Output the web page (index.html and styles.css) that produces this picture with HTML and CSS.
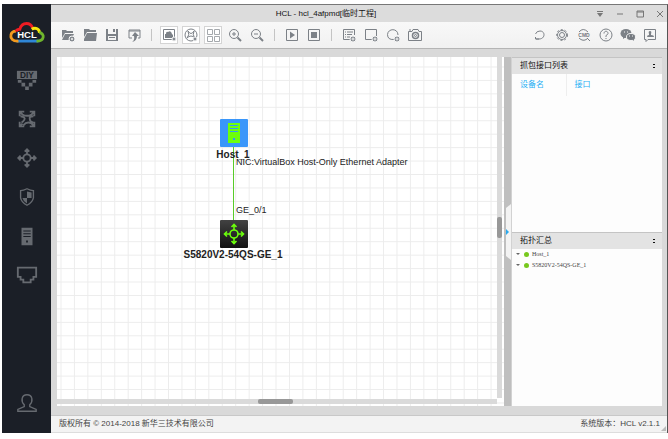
FILE: index.html
```html
<!DOCTYPE html>
<html lang="zh-CN">
<head>
<meta charset="utf-8">
<title>HCL</title>
<link rel="stylesheet" href="styles.css">
</head>
<body>
<div class="window">
  <nav class="sidebar" aria-label="设备">
    <svg class="logo" viewBox="0 0 40 24" role="img" aria-label="HCL">
      <path d="M9 20.500H32" stroke="#2f86d6" stroke-width="3"/>
      <path d="M11 20.500C5 21 2.500 17.500 3 14.500C3.400 11.500 6 10 8.500 10" stroke="#f39a1e" stroke-width="3"/>
      <path d="M8.500 10.500C9.500 8 12 8 12.500 8C13.500 4 16.500 2 19.500 2C22.500 2 25 4 26 7" stroke="#ee1c23" stroke-width="3"/>
      <path d="M25 8C29 5.500 33.500 8 33 12" stroke="#f6e60d" stroke-width="3"/>
      <path d="M33 11.500C36 12 37.500 14.500 37 16.500C36.500 19.500 34 20.500 30 20.500" stroke="#6fb52c" stroke-width="3"/>
      <text class="logo-text" x="20" y="17">HCL</text>
    </svg>
    <div class="devices">
      <button aria-label="DIY"><svg viewBox="0 0 24 24"><path class="fill" d="M1 2H23V11H1z"/><text class="diy" x="12" y="10">DIY</text><path class="fill" d="M2 12h4v3H2zM18 12h4v3h-4zM6 15h4v4H6zM14 15h4v4h-4zM10 19h4v4h-4z"/></svg></button>
      <button aria-label="路由器"><svg viewBox="0 0 24 24"><path class="thick" d="M9 4H4V9M4 4L7 7Q12 10 17 7L20 4M15 4H20V9M4 15V20H9M4 20L7 17M20 20L17 17Q12 14 8 19M15 20H20V15M5 9Q11 10 9 13Q8 15 6 16M19 9Q14 9 15 12Q15 15 19 16"/></svg></button>
      <button aria-label="交换机"><svg viewBox="0 0 24 24"><use class="thick" href="#switch"/></svg></button>
      <button aria-label="防火墙"><svg viewBox="0 0 24 24"><path class="mid" d="M12 3Q16 5 19 5V13Q18 18 12 21Q6 18 5 13V5Q8 5 12 3z"/><path class="fill" d="M12 6l5 1v6h-5zM7 13h5v6q-4-2-5-6z"/></svg></button>
      <button aria-label="主机"><svg viewBox="0 0 24 24"><path class="fill" fill-rule="evenodd" d="M6 3H18V22H6zM8 6v1h8V6zM8 9v1h8V9zM8 12v1h8v-1zM11 17v2h2v-2z"/></svg></button>
      <button aria-label="端口"><svg viewBox="0 0 24 24"><path class="thick" d="M2 4H22V14H19V17H16V20H8V17H5V14H2z"/></svg></button>
    </div>
    <button class="user" aria-label="用户"><svg viewBox="0 0 24 24"><path class="mid" d="M9 14C5 10 6 3 12 3S19 10 15 14V16L22 19V21H2V19L9 16z"/></svg></button>
  </nav>

  <div class="content">
    <header class="titlebar">
      <h1>HCL - hcl_4afpmd[临时工程]</h1>
      <div class="controls">
        <button aria-label="菜单"><svg viewBox="0 0 10 10"><path d="M2 2.500H8"/><path class="fill" d="M2 4H8L5 8z"/></svg></button>
        <button aria-label="最小化"><svg viewBox="0 0 10 10"><path d="M2 5H8"/></svg></button>
        <button aria-label="最大化"><svg viewBox="0 0 10 10"><path d="M2 2H8.500V8H2zM2 3H8.500"/></svg></button>
        <button aria-label="关闭"><svg viewBox="0 0 10 10"><path d="M2 2L8 8M8 2L2 8"/></svg></button>
      </div>
    </header>

    <div class="toolbar">
      <button aria-label="新建"><svg viewBox="0 0 18 18"><path class="fill" d="M3 4h4l1 1h6v2H6L3 12z"/><path class="fill" d="M6 8h9l-1 2-3 4H3z"/><circle class="badge" cx="13" cy="13" r="3"/><circle class="hole" cx="13" cy="13" r="1"/></svg></button>
      <button aria-label="打开"><svg viewBox="0 0 18 18"><path class="fill" d="M3 3h5l1 1h6v2H6L3 11z"/><path class="fill" d="M6 7h10l-1 8H3V13z"/></svg></button>
      <button aria-label="保存"><svg viewBox="0 0 18 18"><path class="fill" fill-rule="evenodd" d="M3 3h12v12H3zM5 3v5h8V3zM5 10v4h8v-4z"/><path class="fill" d="M10 3h2v3h-2zM6 11h6v1H6z"/></svg></button>
      <button aria-label="导出"><svg viewBox="0 0 18 18"><path d="M7 12H4V4H15V12H13M4 5H15"/><path class="fill" d="M10 6l4 4h-2q0 5-5 6 3-2 2-6H7z"/></svg></button>
      <span class="sep"></span>
      <button class="boxed" aria-label="设备图标"><svg viewBox="0 0 18 18"><path d="M3.500 3.500H14.500V13.500H3.500z"/><path class="fill" d="M5 12V8H6Q6 5 8 6 11 4 12 8L13 9V12z"/><circle class="badge" cx="14" cy="13" r="2"/></svg></button>
      <button class="boxed" aria-label="拓扑图"><svg viewBox="0 0 18 18"><circle cx="9" cy="9" r="6"/><path d="M6 5Q9 10 12 5M5 12Q9 8 13 12M6 5Q8 9 5 12M12 5Q10 9 13 12"/><circle class="badge" cx="13" cy="13" r="2"/></svg></button>
      <button class="boxed" aria-label="网格"><svg class="light" viewBox="0 0 18 18"><path d="M3.500 3.500h5v5h-5zM10.500 3.500h5v5h-5zM3.500 10.500h5v5h-5zM10.500 10.500h5v5h-5z"/></svg></button>
      <button aria-label="放大"><svg viewBox="0 0 18 18"><circle cx="8" cy="8" r="4.500"/><path d="M6 8h4M8 6v4"/><path class="thick" d="M11.500 11.500L15 15"/></svg></button>
      <button aria-label="缩小"><svg viewBox="0 0 18 18"><circle cx="8" cy="8" r="4.500"/><path d="M6 8h4"/><path class="thick" d="M11.500 11.500L15 15"/></svg></button>
      <span class="sep"></span>
      <button aria-label="启动"><svg viewBox="0 0 18 18"><path d="M3.500 3.500H14.500V14.500H3.500z"/><path class="fill" d="M7 5.500v7L12 9z"/></svg></button>
      <button aria-label="停止"><svg viewBox="0 0 18 18"><path d="M3.500 3.500H14.500V14.500H3.500z"/><path class="fill" d="M6 6h6v6H6z"/></svg></button>
      <span class="sep"></span>
      <button aria-label="添加列表"><svg viewBox="0 0 18 18"><path d="M10 13.500H3.500V3.500H14.500V9M5 6h1M7 6h6M5 8.500h1M7 8.500h5M5 11h1M7 11h3"/><circle class="badge" cx="13" cy="13" r="3"/><path class="plus" d="M11.500 13h3M13 11.500v3"/></svg></button>
      <button aria-label="添加矩形"><svg viewBox="0 0 18 18"><path d="M10 13.500H3.500V3.500H14.500V10"/><circle class="badge" cx="13" cy="13" r="3"/><path class="plus" d="M11.500 13h3M13 11.500v3"/></svg></button>
      <button aria-label="添加圆形"><svg viewBox="0 0 18 18"><path d="M10 13.500Q3.500 14 3.500 8.500C4 2 14 2 14 9"/><circle class="badge" cx="13" cy="13" r="3"/><path class="plus" d="M11.500 13h3M13 11.500v3"/></svg></button>
      <button aria-label="截图"><svg viewBox="0 0 18 18"><path d="M2.500 5.500H6L7 3.500H12L13 5.500H15.500V14.500H2.500zM3 4h2"/><circle class="mid" cx="9.500" cy="9.500" r="3"/><circle cx="9.500" cy="9.500" r="1"/></svg></button>
      <div class="tools-right">
        <button aria-label="刷新"><svg viewBox="0 0 18 18"><path d="M5 13H8C14.500 13 14.500 5 9 5Q5.500 5 4.500 8M4.500 11V13H8"/></svg></button>
        <button aria-label="设置"><svg viewBox="0 0 18 18"><circle cx="9" cy="9" r="4.500"/><circle cx="9" cy="9" r="2.500"/><circle class="teeth" cx="9" cy="9" r="5.500"/></svg></button>
        <button aria-label="命令"><svg viewBox="0 0 18 18"><path d="M4 6Q8 1 13 6M4 12Q8 16 12 13M12 12L15 15"/><text class="cmd" x="9" y="11">CMD</text></svg></button>
        <button aria-label="帮助"><svg viewBox="0 0 18 18"><circle cx="9" cy="9" r="6"/><path d="M7 7.500C7 4.500 11 4.500 11 7.500Q11 8.500 9 9.500V11M9 12v1"/></svg></button>
        <button aria-label="微信"><svg viewBox="0 0 18 18"><ellipse class="fill" cx="7" cy="7.500" rx="5.500" ry="4.500"/><path class="fill" d="M4 10v3l3-2z"/><ellipse class="bubble" cx="12" cy="11" rx="4.500" ry="3.500"/><path class="fill" d="M13 13l2 2v-3z"/><path class="plus" d="M5 6h1M8 6h1M10 10h1M13 10h1"/></svg></button>
        <button aria-label="反馈"><svg viewBox="0 0 18 18"><path d="M7 13.500L5 15.500V13.500H3.500V3.500H14.500V13.500z"/><path class="fill" d="M9 5q2 0 1 3v1q3 0 3 2H6q0-2 2-2V8Q7 5 9 5z"/></svg></button>
      </div>
    </div>

    <main class="workspace">
      <section class="canvas" aria-label="拓扑">
        <svg class="grid">
          <defs><pattern id="cells" x="3.500" y="9.500" width="13.440" height="13.440" patternUnits="userSpaceOnUse"><path d="M0.500 0V13.440M0 0.500H13.440" stroke="#ececec"/></pattern></defs>
          <rect width="100%" height="100%" fill="url(#cells)"/>
          <path d="M176.500 88V164" stroke="#58cc28"/>
        </svg>
        <svg class="node host" viewBox="0 0 28 28"><rect width="28" height="28" rx="1" fill="#3996fa"/><path fill="#6cff0c" fill-rule="evenodd" d="M8 4H20V24H8zM10 6v1h8V6zM10 9v1h8V9zM10 12v1h8v-1zM13 19v2h2v-2z"/></svg>
        <svg class="node switch" viewBox="0 0 28 28"><defs><linearGradient id="dark" x2="0" y2="1"><stop stop-color="#424242"/><stop offset="1" stop-color="#101010"/></linearGradient><g id="switch"><circle cx="12" cy="12" r="4"/><path d="M12 8V3M12 16V21M8 12H3M16 12H21M9.500 5L12 2.500L14.500 5M9.500 19L12 21.500L14.500 19M5 9.500L2.500 12L5 14.500M19 9.500L21.500 12L19 14.500"/></g></defs><rect width="28" height="28" rx="1" fill="url(#dark)"/><use href="#switch" x="2" y="2" fill="none" stroke="#6cff0c" stroke-width="1.600"/></svg>
        <span class="name host-name">Host_1</span>
        <span class="name switch-name">S5820V2-54QS-GE_1</span>
        <span class="port nic">NIC:VirtualBox Host-Only Ethernet Adapter</span>
        <span class="port ge">GE_0/1</span>
        <div class="scroll-y"><i></i></div>
        <div class="scroll-x"><i></i></div>
      </section>
      <div class="splitter"><button aria-label="收起面板"><svg viewBox="0 0 6 56"><path fill="#f3f3f3" d="M6 0L1 4V52L6 56z"/><path fill="#29a9ee" d="M1 25L4 28L1 31z"/></svg></button></div>
      <aside class="panels">
        <section class="panel">
          <h2>抓包接口列表<button aria-label="折叠"><svg viewBox="0 0 6 6"><path d="M2 1.500H4M2 4.500H4"/></svg></button></h2>
          <table><thead><tr><th>设备名</th><th>接口</th></tr></thead></table>
        </section>
        <section class="panel">
          <h2>拓扑汇总<button aria-label="折叠"><svg viewBox="0 0 6 6"><path d="M2 1.500H4M2 4.500H4"/></svg></button></h2>
          <ul><li>Host_1</li><li>S5820V2-54QS-GE_1</li></ul>
        </section>
      </aside>
    </main>

    <footer class="statusbar"><span>版权所有 © 2014-2018 新华三技术有限公司</span><span>系统版本：HCL v2.1.1</span><svg class="grip" viewBox="0 0 6 6"><path fill="#bbb" d="M6 0V6H0z"/></svg></footer>
  </div>
</div>
</body>
</html>
```
FILE: styles.css
```css
* { box-sizing: border-box; }
body {
  margin: 0;
  background: #fff;
  color: #222;
  font: 8px/12px "Liberation Sans", "Noto Sans CJK SC", sans-serif;
}
button { padding: 0; border: 0; background: none; color: inherit; display: grid; place-items: center; }
svg { display: block; fill: none; stroke: none; }
button svg { stroke: currentColor; }
button .fill { fill: currentColor; stroke: none; }
button .mid { stroke-width: 1.500; }
button .thick { stroke-width: 2; }
button text { stroke: none; }

.window { display: flex; height: 100vh; padding: 4px 0 6px 2px; }

.sidebar {
  flex: 0 0 49px;
  display: flex;
  flex-direction: column;
  align-items: center;
  padding: 17px 0 16px;
  background: #1b1f27;
  color: #666a70;
}
.logo { width: 38px; height: 24px; }
.logo-text { font-size: 10px; font-weight: bold; fill: #fff; text-anchor: middle; }
.devices { margin-top: 15px; }
.sidebar button { width: 49px; height: 39px; }
.sidebar button svg { width: 22px; height: 22px; }
.diy { font-size: 9px; font-weight: bold; fill: #1b1f27; text-anchor: middle; }
.sidebar .user { height: 28px; margin-top: auto; }

.content {
  flex: 1;
  min-width: 0;
  display: flex;
  flex-direction: column;
  border-top: 1px solid #777;
  border-right: 1px solid #555;
}
.titlebar { display: flex; align-items: center; height: 17px; background: #dcdcdc; position: relative; justify-content: center; }
h1 { margin: 0; font-size: 8px; font-weight: normal; color: #111; padding-right: 66px; }
.controls { position: absolute; right: 2px; display: flex; gap: 10px; color: #777; }
.controls svg { width: 10px; height: 10px; }

.toolbar {
  display: flex;
  align-items: center;
  gap: 4px;
  height: 27px;
  padding: 0 8px;
  background: linear-gradient(#f8f8f8, #f1f1f1);
  border-bottom: 1px solid #b5b5b5;
  color: #7c8187;
}
.toolbar button, .toolbar svg { width: 18px; height: 18px; }
.toolbar .boxed { outline: 1px solid #d4d4d4; outline-offset: -1px; background: #fff; }
.light { color: #a4a8ac; }
.sep { width: 1px; height: 12px; margin: 0 4px; background: #c4c4c4; }
.tools-right { display: flex; gap: 4px; margin-left: auto; }
.badge { fill: #858a90; stroke: #f4f4f4; }
.plus { stroke: #f4f4f4; }
.hole { fill: #f4f4f4; stroke: none; }
.bubble { fill: #757a80; stroke: #f4f4f4; }
.teeth { stroke-dasharray: 2 2; }
.cmd { font-size: 5px; font-weight: bold; fill: #757a80; text-anchor: middle; }

.workspace { flex: 1; min-height: 0; display: flex; padding: 8px 5px 9px 6px; background: #d9d9d9; }
.canvas { flex: 1; min-width: 0; position: relative; overflow: hidden; background: #fff; }
.grid { width: 100%; height: 100%; }
.node { position: absolute; width: 28px; height: 28px; left: 163px; }
.host { top: 62px; }
.switch { top: 163px; }
.name { position: absolute; left: 176px; transform: translateX(-50%); font-size: 10px; font-weight: bold; white-space: nowrap; }
.host-name { top: 92px; }
.switch-name { top: 192px; }
.port { position: absolute; left: 179px; font-size: 9px; white-space: nowrap; }
.nic { top: 99px; }
.ge { top: 147px; }
.scroll-y, .scroll-x { position: absolute; background: #dadada; }
.scroll-y { top: 0; right: 2px; bottom: 8px; width: 5px; }
.scroll-x { left: 0; right: 7px; bottom: 2px; height: 5px; }
.scroll-y i, .scroll-x i { display: block; border-radius: 2px; background: #989898; }
.scroll-y i { height: 21px; margin-top: 160px; }
.scroll-x i { width: 35px; height: 5px; margin-left: 201px; }

.splitter { flex: 0 0 8px; display: flex; align-items: center; justify-content: flex-end; background: #bfbfbf; border-right: 1px solid #d2d2d2; }
.splitter svg { width: 6px; height: 56px; stroke: none; }

.panels { flex: 0 0 150px; display: grid; grid-template-rows: 1fr 1fr; background: #fdfdfd; }
h2 {
  display: flex;
  justify-content: space-between;
  align-items: center;
  height: 17px;
  margin: 0;
  padding: 0 5px 0 8px;
  background: #e3e3e3;
  border-top: 1px solid #c4c4c4;
  font-size: 8px;
  font-weight: normal;
  color: #111;
}
h2 svg { width: 6px; height: 6px; }
table { width: 100%; border-collapse: collapse; table-layout: fixed; }
th { height: 22px; padding: 0 8px; font-weight: normal; text-align: left; color: #29b0f4; }
th:first-child { width: 54px; border-right: 1px solid #eee; }
ul { margin: 0; padding: 0 4px; list-style: none; }
li { display: flex; align-items: center; height: 11px; font: 6px/11px "Liberation Serif", serif; color: #444; }
li::before { content: ""; order: -2; border: 2px solid transparent; border-top-color: #666; border-bottom: 0; margin-right: 4px; }
li::after { content: ""; order: -1; width: 5px; height: 5px; margin-right: 3px; border-radius: 50%; background: #78c81e; }

.statusbar {
  position: relative;
  display: flex;
  justify-content: space-between;
  align-items: center;
  height: 18px;
  padding: 0 7px 0 8px;
  background: #f3f3f3;
  border-top: 1px solid #c8c8c8;
  border-bottom: 1px solid #ddd;
  color: #444;
}
.grip { position: absolute; right: 1px; bottom: 1px; width: 5px; height: 5px; }
```
